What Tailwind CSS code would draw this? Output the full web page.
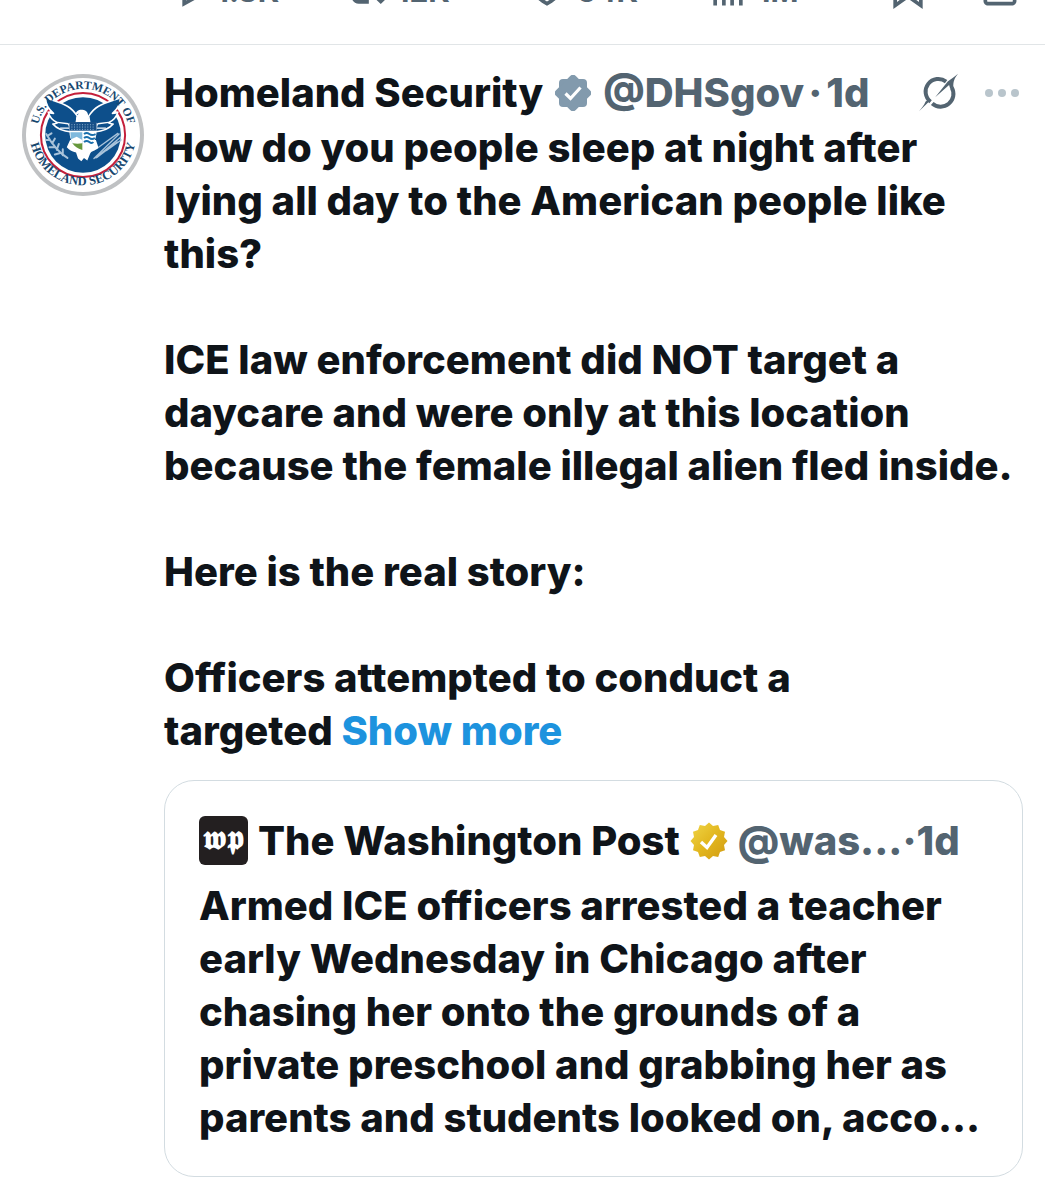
<!DOCTYPE html>
<html lang="en">
<head>
    <meta charset="UTF-8">
    <meta name="viewport" content="width=device-width, initial-scale=1.0">
    <title>Homeland Security on X</title>

    <script src="https://cdn.jsdelivr.net/npm/@tailwindcss/browser@4"></script>
</head>

<body class="bg-white text-[#0f1419] font-['Inter','Open_Sans',sans-serif] overflow-x-hidden">

<!-- Action bar of the previous post -->
<header class="flex items-end h-[45px] pl-[164px] pr-[23px] pb-[29px] overflow-hidden border-b border-[#e1e5e7] text-[#536471] text-[30px] leading-[48px] font-bold">
    <button type="button" aria-label="Reply" class="flex flex-1 gap-2">
        <svg class="size-11 mb-1 shrink-0" viewBox="0 0 24 24" fill="currentColor"><path d="M1.751 10c0-4.42 3.584-8 8.005-8h4.366c4.49 0 8.129 3.64 8.129 8.13 0 2.96-1.607 5.68-4.196 7.11l-8.054 4.46v-3.69h-.067c-4.49.1-8.183-3.51-8.183-8.01zm8.005-6c-3.317 0-6.005 2.69-6.005 6 0 3.37 2.77 6.08 6.138 6.01l.351-.01h1.761v2.3l5.087-2.81c1.951-1.08 3.163-3.13 3.163-5.36 0-3.39-2.744-6.13-6.129-6.13H9.756z"/></svg>
        <span>1.8K</span>
    </button>
    <button type="button" aria-label="Repost" class="flex flex-1 gap-2">
        <svg class="size-11 mb-1 shrink-0" viewBox="0 0 24 24" fill="currentColor"><path d="M4.5 3.88l4.432 4.14-1.364 1.46L5.5 7.55V16c0 1.1.896 2 2 2H13v2H7.5c-2.209 0-4-1.79-4-4V7.55L1.432 9.48.068 8.02 4.5 3.88zM16.5 6H11V4h5.5c2.209 0 4 1.79 4 4v8.45l2.068-1.93 1.364 1.46-4.432 4.14-4.432-4.14 1.364-1.46 2.068 1.93V8c0-1.1-.896-2-2-2z"/></svg>
        <span>12K</span>
    </button>
    <button type="button" aria-label="Like" class="flex flex-1 gap-2">
        <svg class="size-11 mb-1 shrink-0" viewBox="0 0 24 24" fill="currentColor"><path d="M16.697 5.5c-1.222-.06-2.679.51-3.89 2.16l-.805 1.09-.806-1.09C9.984 6.01 8.526 5.44 7.304 5.5c-1.243.07-2.349.78-2.91 1.91-.552 1.12-.633 2.78.479 4.82 1.074 1.97 3.257 4.27 7.129 6.61 3.87-2.34 6.052-4.64 7.126-6.61 1.111-2.04 1.03-3.7.477-4.82-.561-1.13-1.666-1.84-2.908-1.91zm4.187 7.69c-1.351 2.48-4.001 5.12-8.379 7.67l-.503.3-.504-.3c-4.379-2.55-7.029-5.19-8.382-7.67-1.36-2.5-1.41-4.86-.514-6.67.887-1.79 2.647-2.91 4.601-3.01 1.651-.09 3.368.56 4.798 2.01 1.429-1.45 3.146-2.1 4.796-2.01 1.954.1 3.714 1.22 4.601 3.01.896 1.81.846 4.17-.514 6.67z"/></svg>
        <span>54K</span>
    </button>
    <button type="button" aria-label="Views" class="flex flex-1 gap-2">
        <svg class="size-11 mb-1 shrink-0" viewBox="0 0 24 24" fill="currentColor"><path d="M8.750 21V3h2v18h-2zM18 21V8.500h2V21h-2zM4 21l.004-10h2L6 21H4zm9.248 0v-7h2v7h-2z"/></svg>
        <span>1M</span>
    </button>
    <div class="flex gap-12 shrink-0">
        <button type="button" aria-label="Bookmark">
            <svg class="size-11 mb-1" viewBox="0 0 24 24" fill="currentColor"><path d="M4 4.500C4 3.120 5.119 2 6.500 2h11C18.881 2 20 3.120 20 4.500v18.440l-8-5.710-8 5.710V4.500zM6.500 4c-.276 0-.5.22-.5.5v14.560l6-4.290 6 4.290V4.500c0-.28-.224-.5-.5-.5h-11z"/></svg>
        </button>
        <button type="button" aria-label="Share">
            <svg class="size-11 mb-1" viewBox="0 0 24 24" fill="currentColor"><path d="M12 2.590l5.700 5.700-1.410 1.420L13 6.410V16h-2V6.410l-3.300 3.300-1.410-1.420L12 2.590zM21 15l-.02 3.510c0 1.380-1.120 2.490-2.500 2.490H5.500C4.110 21 3 19.880 3 18.500V15h2v3.500c0 .28.22.5.5.5h12.980c.28 0 .5-.22.5-.5L19 15h2z"/></svg>
        </button>
    </div>
</header>

<!-- Post -->
<article class="flex gap-5 pl-[22px] pr-[22px] pt-[21px] pb-[22px] text-[40px] leading-[53px] font-extrabold">

    <!-- Avatar -->
    <a href="#" aria-label="Homeland Security" class="shrink-0 mt-2 size-[122px]">
        <svg class="size-full" viewBox="35 41 368 368">
            <defs>
                <path id="arcTop" d="M80 225A139 139 0 0 1 358 225"/>
                <path id="arcBottom" d="M57 215A162 162 0 0 0 381 215"/>
            </defs>
            <circle cx="219" cy="225" r="184" fill="#bfc1c3"/>
            <circle cx="219" cy="225" r="172" fill="#fff"/>
            <circle cx="219" cy="225" r="127" fill="none" stroke="#c41f3a" stroke-width="6"/>
            <circle cx="219" cy="225" r="114" fill="#0d4f8b"/>
            <!-- Wings -->
            <path d="M106 112C122 120 150 126 172 138C186 146 194 156 202 168L198 192H176L184 216C160 214 140 206 128 192C134 192 138 190 142 188C128 182 118 170 114 156C120 160 126 160 130 160C116 148 106 130 106 112Z" fill="#0d4f8b" stroke="#fff" stroke-width="5" stroke-linejoin="round"/>
            <path d="M332 112C316 120 288 126 266 138C252 146 244 156 236 168L240 192H262L254 216C278 214 298 206 310 192C304 192 300 190 296 188C310 182 320 170 324 156C318 160 312 160 308 160C322 148 332 130 332 112Z" fill="#0d4f8b" stroke="#fff" stroke-width="5" stroke-linejoin="round"/>
            <path d="M142 187L174 191M296 187L264 191M150 204L180 204M288 204L258 204" stroke="#fff" stroke-width="4"/>
            <!-- Head and tail -->
            <path d="M199 186C196 172 202 164 207 160L197 164C197 153 206 148 217 149C230 150 236 160 234 170L240 186Z" fill="#fff"/>
            <path d="M170 262L180 240H258L266 264C254 274 244 272 240 282L232 302L222 294L214 304L204 296L198 278C188 274 178 272 170 262Z" fill="#fff"/>
            <!-- Shield -->
            <path d="M178 188H260V212C260 242 246 262 219 272C192 262 178 242 178 212Z" fill="#fff"/>
            <path d="M178 186H260V212H178Z" fill="#174f87"/>
            <path d="M184 194H256M184 201H256M184 208H256" stroke="#8fb3d3" stroke-width="3" stroke-dasharray="3 5"/>
            <path d="M181 217H217V252H188C184 244 181 232 181 217Z" fill="#7fb9dd"/>
            <path d="M183 238L200 230L217 240V252H188Z" fill="#fff"/>
            <path d="M187 250C198 252 208 252 217 250V270C202 266 194 260 187 250Z" fill="#66983c"/>
            <path d="M222 222Q230 216 238 222T257 222M222 234Q230 228 238 234T255 234M222 246Q230 240 238 246T250 246" fill="none" stroke="#1b70ad" stroke-width="6"/>
            <!-- Olive branch and arrows -->
            <path d="M108 222C124 250 142 276 172 294M114 226L124 220M118 240L108 240M126 250L134 236M132 262L118 262M140 270L146 252M148 280L134 284M158 286L158 268" fill="none" stroke="#a9c3da" stroke-width="6" stroke-linecap="round"/>
            <path d="M328 222L252 296M332 232L258 294M322 246L262 292M324 220L266 262M334 240L290 272" fill="none" stroke="#a9c3da" stroke-width="4" stroke-linecap="round"/>
            <g class="font-['Liberation_Serif',serif] font-bold" fill="#17476f" text-anchor="middle">
                <text font-size="35"><textPath href="#arcTop" startOffset="50%">U.S. DEPARTMENT OF</textPath></text>
                <text font-size="38"><textPath href="#arcBottom" startOffset="50%">HOMELAND SECURITY</textPath></text>
            </g>
        </svg>
    </a>

    <div class="flex-1 min-w-0">
        <!-- Author -->
        <div class="flex items-center whitespace-nowrap text-[#536471]">
            <a href="#" class="text-[#0f1419]">Homeland Security</a>
            <svg class="size-9 mx-3 shrink-0" viewBox="0 0 36 36" fill="#829aad">
                <rect x="4" y="4" width="28" height="28" rx="4"/>
                <rect x="4" y="4" width="28" height="28" rx="4" transform="rotate(45 18 18)"/>
                <path d="M10.500 18.500L15.500 23.500L25.500 12.500" fill="none" stroke="#fff" stroke-width="3.200"/>
            </svg>
            <a href="#">@DHSgov</a>
            <span class="mx-1">·</span>
            <a href="#">1d</a>
            <button type="button" aria-label="Explain this post" class="ml-auto">
                <svg class="w-[41px] h-[39px]" viewBox="55 40 122 118" fill="#536471">
                    <path d="M92 127A38.500 38.500 0 0 1 139 66" fill="none" stroke="#536471" stroke-width="12"/>
                    <path d="M156 84A38.500 38.500 0 0 1 97 132" fill="none" stroke="#536471" stroke-width="12"/>
                    <path d="M175 42C164 56 160 66 161 84L151 86L148 76L106 113L144 66C153 58 164 52 175 42Z"/>
                    <path d="M94 120L57 156C66 144 72 138 77 126L84 122Z"/>
                </svg>
            </button>
            <button type="button" aria-label="More" class="ml-[26px] mr-1">
                <svg class="w-[34px] h-2" viewBox="0 0 34 8" fill="#b9c5cc"><circle cx="4" cy="4" r="4"/><circle cx="17" cy="4" r="4"/><circle cx="30" cy="4" r="4"/></svg>
            </button>
        </div>

        <!-- Text -->
        <div class="mt-[2px] space-y-[53px]">
            <p>How do you people sleep at night after<br>lying all day to the American people like<br>this?</p>
            <p class="whitespace-nowrap">ICE law enforcement did NOT target a<br>daycare and were only at this location<br>because the female illegal alien fled inside.</p>
            <p>Here is the real story:</p>
            <p>Officers attempted to conduct a<br>targeted <a href="#" class="text-[#1d93de]">Show more</a></p>
        </div>

        <!-- Quoted post -->
        <section class="mt-[23px] border border-[#d3dce1] rounded-[30px] pl-[34px] pr-7 pt-[33px] pb-8">
            <div class="flex items-center whitespace-nowrap text-[#536471]">
                <svg class="size-[49px] shrink-0 mr-[10px]" viewBox="0 0 49 49">
                    <rect width="49" height="49" rx="6" fill="#231f20"/>
                    <text x="24" y="33" text-anchor="middle" font-size="33" fill="#fff" class="font-['DejaVu_Sans','DejaVu_Serif',serif]">𝖜𝖕</text>
                </svg>
                <a href="#" class="text-[#0f1419]">The Washington Post</a>
                <svg class="size-[38px] mx-[10px] shrink-0" viewBox="-19 -19 38 38">
                    <defs>
                        <linearGradient id="gold" x1="0" y1="0" x2="1" y2="1">
                            <stop offset="0" stop-color="#f0d648"/>
                            <stop offset=".5" stop-color="#e2b71f"/>
                            <stop offset="1" stop-color="#d19a12"/>
                        </linearGradient>
                    </defs>
                    <path d="M0-18.500L4-15L9.200-16L11-11L16-9.200L15-4L18.500 0L15 4L16 9.200L11 11L9.200 16L4 15L0 18.500L-4 15L-9.200 16L-11 11L-16 9.200L-15 4L-18.500 0L-15-4L-16-9.200L-11-11L-9.200-16L-4-15Z" fill="url(#gold)"/>
                    <path d="M-8 1L-2 6.500L7-6" fill="none" stroke="#fff" stroke-width="3.400"/>
                </svg>
                <a href="#">@was...</a>
                <span>·</span>
                <a href="#">1d</a>
            </div>
            <p class="mt-3 whitespace-nowrap">Armed ICE officers arrested a teacher<br>early Wednesday in Chicago after<br>chasing her onto the grounds of a<br>private preschool and grabbing her as<br>parents and students looked on, acco...</p>
        </section>
    </div>
</article>

</body>
</html>
